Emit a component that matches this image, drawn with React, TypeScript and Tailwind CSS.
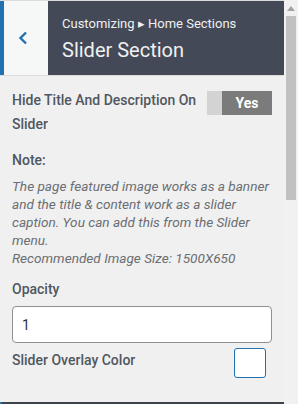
import React from 'react';

const App: React.FC = () => {
    return (
        <div className="w-[298px] h-[404px] flex overflow-hidden bg-[#f0f0f1] font-['Roboto',sans-serif]">
            <div className="w-[284px] flex flex-col">
                <div className="flex h-[76px] border-t border-b border-[#dcdcde] shrink-0">
                    <div className="w-[4px] bg-[#2271b1]" />
                    <button className="w-[44px] bg-[#f6f7f7] flex items-center pl-[14px]">
                        <svg width="10" height="14" viewBox="0 0 10 14">
                            <path d="M8 1.5 L2.5 7 L8 12.5" fill="none" stroke="#2271b1" strokeWidth="2.4" />
                        </svg>
                    </button>
                    <div className="flex-1 bg-[#434956] pl-[14px] pt-[14px] text-[#f0f0f1]">
                        <div className="text-[13px] leading-[18px]">Customizing ▸ Home Sections</div>
                        <div className="text-[20px] leading-[28px] mt-[3px]">Slider Section</div>
                    </div>
                </div>

                <div className="flex-1 px-3 pt-[12px] text-[#50575e]">
                    <div className="flex items-start">
                        <div className="flex-1 text-[14px] leading-[24px] font-medium pr-2">
                            Hide Title And Description On Slider
                        </div>
                        <div className="flex w-[65px] h-[24px] mt-[3px] shrink-0">
                            <div className="w-[15px] bg-[#d3d3d3]" />
                            <div className="flex-1 bg-[#7b7b7b] text-white text-[14px] font-bold flex items-center justify-center">
                                Yes
                            </div>
                        </div>
                    </div>

                    <div className="mt-[12px] text-[14px] leading-[24px] font-medium">Note:</div>
                    <div className="mt-[5px] text-[13.6px] leading-[18px] italic text-[#6b6e72]">
                        The page featured image works as a banner and the title &amp; content work as a slider caption. You can add this from the Slider menu.
                        <br />
                        Recommended Image Size: 1500X650
                    </div>

                    <div className="mt-[10px] text-[14px] leading-[24px] font-medium">Opacity</div>
                    <input
                        type="text"
                        defaultValue="1"
                        className="mt-[5px] w-full h-[37px] bg-white border border-[#8c8f94] rounded-[4px] px-[9px] text-[14px] text-[#2c3338] outline-none"
                    />

                    <div className="flex items-start mt-[5px]">
                        <div className="flex-1 text-[14px] leading-[24px] font-medium">Slider Overlay Color</div>
                        <button className="w-[32px] h-[30px] mr-[6px] bg-white border border-[#2271b1] rounded-[3px]" />
                    </div>
                </div>

                <div className="h-[2px] bg-[#3c434a] shrink-0 flex">
                    <div className="w-[2px] bg-[#2271b1]" />
                </div>
            </div>

            <div className="w-[14px] bg-[#f1f1f1] flex flex-col items-center">
                <svg width="8" height="5" viewBox="0 0 8 5" className="mt-[6px]">
                    <path d="M0 5 L4 0 L8 5 Z" fill="#a3a3a3" />
                </svg>
                <div className="w-[10px] h-[184px] bg-[#c1c1c1] mt-[5px]" />
            </div>
        </div>
    );
};

export default App;
